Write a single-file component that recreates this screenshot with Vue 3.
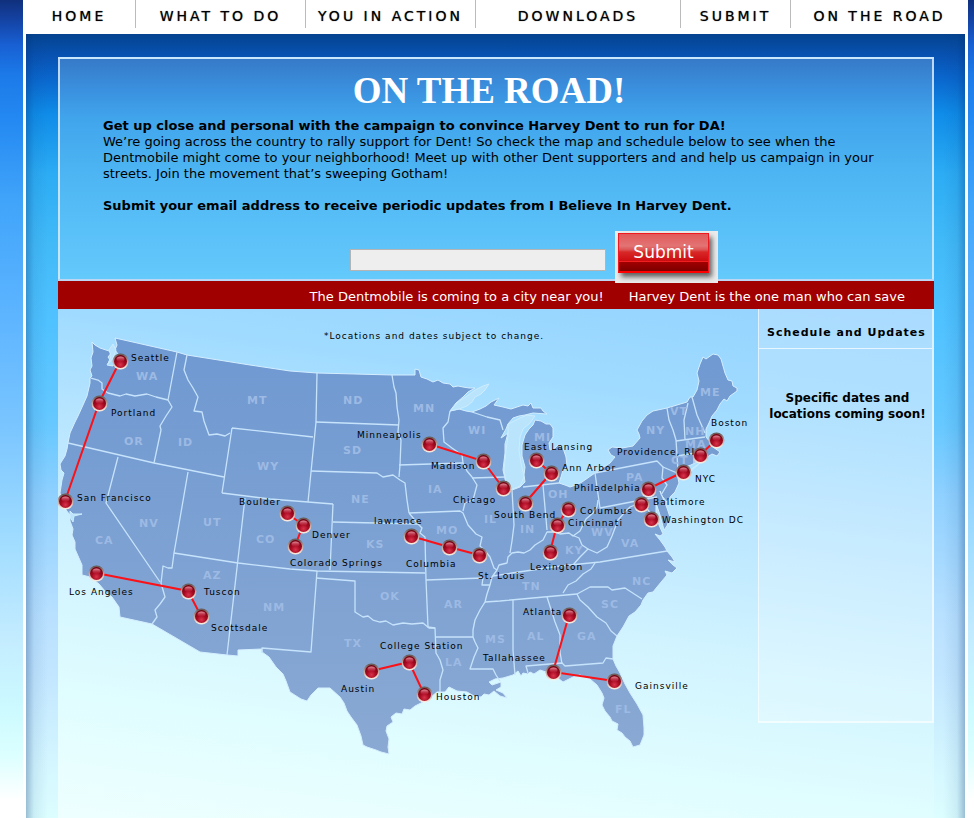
<script setup>
import { ref } from 'vue'

const email = ref('')

const navItems = ['HOME', 'WHAT TO DO', 'YOU IN ACTION', 'DOWNLOADS', 'SUBMIT', 'ON THE ROAD']

const stops = [
  { name: 'Seattle', x: 120, y: 361, lx: 131, ly: 361 },
  { name: 'Portland', x: 99, y: 403, lx: 111, ly: 416 },
  { name: 'San Francisco', x: 65, y: 501, lx: 77, ly: 501 },
  { name: 'Los Angeles', x: 96, y: 573, lx: 69, ly: 595 },
  { name: 'Tuscon', x: 188, y: 591, lx: 204, ly: 595 },
  { name: 'Scottsdale', x: 201, y: 616, lx: 211, ly: 631 },
  { name: 'Boulder', x: 287, y: 513, lx: 239, ly: 505 },
  { name: 'Denver', x: 303, y: 525, lx: 312, ly: 538 },
  { name: 'Colorado Springs', x: 295, y: 546, lx: 290, ly: 566 },
  { name: 'Minneapolis', x: 429, y: 444, lx: 357, ly: 438 },
  { name: 'Madison', x: 483, y: 461, lx: 431, ly: 469 },
  { name: 'Chicago', x: 503, y: 488, lx: 453, ly: 503 },
  { name: 'East Lansing', x: 536, y: 460, lx: 524, ly: 450 },
  { name: 'Ann Arbor', x: 551, y: 473, lx: 562, ly: 471 },
  { name: 'South Bend', x: 525, y: 503, lx: 494, ly: 518 },
  { name: 'lawrence', x: 411, y: 536, lx: 374, ly: 524 },
  { name: 'Columbia', x: 449, y: 547, lx: 406, ly: 567 },
  { name: 'St. Louis', x: 479, y: 555, lx: 478, ly: 579 },
  { name: 'Columbus', x: 568, y: 509, lx: 580, ly: 514 },
  { name: 'Cincinnati', x: 557, y: 525, lx: 568, ly: 526 },
  { name: 'Lexington', x: 550, y: 552, lx: 530, ly: 570 },
  { name: 'Boston', x: 716, y: 440, lx: 711, ly: 426 },
  { name: 'Providence, RI', x: 700, y: 455, lx: 617, ly: 455 },
  { name: 'NYC', x: 683, y: 472, lx: 695, ly: 482 },
  { name: 'Philadelphia', x: 648, y: 489, lx: 574, ly: 491 },
  { name: 'Baltimore', x: 641, y: 504, lx: 653, ly: 505 },
  { name: 'Washington DC', x: 651, y: 519, lx: 662, ly: 523 },
  { name: 'Atlanta', x: 569, y: 615, lx: 523, ly: 615 },
  { name: 'Tallahassee', x: 553, y: 672, lx: 483, ly: 661 },
  { name: 'Gainsville', x: 614, y: 681, lx: 635, ly: 689 },
  { name: 'Austin', x: 371, y: 671, lx: 341, ly: 692 },
  { name: 'College Station', x: 409, y: 662, lx: 380, ly: 649 },
  { name: 'Houston', x: 424, y: 694, lx: 436, ly: 700 },
]

const routes = [
  '120,361 99,403 65,501',
  '96,573 188,591 201,616',
  '287,513 303,525 295,546',
  '429,444 483,461 503,488',
  '536,460 551,473 525,503',
  '411,536 449,547 479,555',
  '568,509 557,525 550,552',
  '716,440 700,455',
  '683,472 648,489',
  '569,615 553,672 614,681',
  '371,671 409,662 424,694',
]

const states = [
  ['WA', 136, 380], ['OR', 124, 445], ['ID', 178, 446], ['MT', 247, 404], ['WY', 257, 470],
  ['NV', 139, 527], ['UT', 203, 526], ['CA', 95, 544], ['CO', 256, 543], ['AZ', 203, 579],
  ['NM', 263, 611], ['ND', 343, 404], ['SD', 343, 454], ['NE', 351, 503], ['KS', 366, 548],
  ['OK', 380, 600], ['TX', 344, 647], ['MN', 413, 412], ['IA', 428, 493], ['MO', 436, 534],
  ['AR', 444, 608], ['LA', 445, 666], ['WI', 468, 434], ['IL', 484, 523], ['IN', 520, 533],
  ['MI', 534, 441], ['OH', 548, 498], ['KY', 565, 554], ['TN', 522, 590], ['MS', 485, 643],
  ['AL', 527, 640], ['GA', 577, 640], ['FL', 615, 713], ['SC', 601, 608], ['NC', 632, 585],
  ['VA', 621, 547], ['WV', 591, 536], ['PA', 626, 481], ['NY', 646, 434], ['VT', 670, 415],
  ['NH', 685, 435], ['MA', 685, 448], ['CT', 671, 464], ['ME', 700, 396],
]

const mainland =
  'M92 342 L95 345 100 348 106 350 112 352 108 357 110 360 107 365 113 366 115 360 118 354 115 350 117 345 115 338 ' +
  'L146 345 177 352 187 355 250 365 290 371 317 373 355 374 392 375 415 375 415 369 419 370 421 377 ' +
  'L427 379 433 382 438 380 443 383 450 384 453 387 458 386 463 387 469 388 475 388 468 392 463 397 456 403 450 411 ' +
  'L459 409 466 411 472 412 480 409 486 406 491 402 499 398 494 405 503 407 511 409 517 407 523 405 528 406 531 403 533 408 541 408 543 411 547 414 ' +
  'L533 413 525 415 519 416 513 418 508 424 506 429 501 438 504 436 508 433 505 444 505 453 503 470 506 483 512 490 520 487 ' +
  'L525 482 524 475 525 467 522 456 522 445 525 435 529 429 533 425 535 420 541 421 546 424 550 424 553 428 553 437 549 443 550 450 555 448 558 445 563 448 566 457 567 466 563 470 561 477 559 483 ' +
  'L565 485 570 487 576 485 582 482 592 475 601 469 610 463 615 457 611 455 608 450 612 447 622 448 633 446 640 438 639 434 637 430 642 421 647 415 653 411 667 408 687 402 690 397 693 397 697 390 ' +
  'L699 381 697 373 700 364 703 357 706 359 713 354 718 355 721 359 725 373 728 380 732 381 733 386 737 388 737 391 730 396 727 401 724 399 720 404 717 410 712 416 709 423 706 429 706 437 ' +
  'L711 443 713 447 720 452 717 456 712 454 706 458 699 461 691 465 683 468 677 473 679 483 675 492 671 496 667 502 662 496 660 491 665 503 667 508 670 517 667 526 664 530 660 515 656 503 656 513 659 525 ' +
  'L663 534 660 536 655 534 660 540 665 547 667 551 672 557 675 562 668 560 673 565 677 568 672 573 665 571 667 575 662 581 657 587 653 592 648 593 643 600 641 605 635 612 629 616 623 627 617 636 613 646 613 659 ' +
  'L616 666 620 673 625 684 630 693 637 704 643 715 644 728 644 735 640 745 633 747 630 741 625 737 622 733 617 730 618 724 612 721 610 717 605 711 602 705 604 698 602 693 597 685 590 679 580 675 573 677 563 682 558 678 552 674 540 670 ' +
  'L534 674 530 672 528 674 523 673 521 676 518 671 513 675 503 678 495 679 489 682 492 685 501 682 501 687 496 690 503 693 507 698 500 696 494 691 489 695 484 694 481 697 474 696 467 692 457 691 449 687 445 692 437 692 ' +
  'L431 697 423 702 415 706 410 710 404 709 402 714 396 713 391 717 393 722 387 726 386 731 389 739 388 747 389 754 381 752 376 750 367 747 363 745 361 736 357 725 351 717 347 711 344 703 340 697 ' +
  'L330 688 318 688 311 695 307 701 301 699 290 692 286 681 283 674 276 667 269 657 262 652 262 649 238 650 238 656 227 655 200 652 152 624 120 617 119 607 112 597 105 591 99 584 90 577 82 575 82 565 ' +
  'L75 549 75 542 72 535 73 529 70 521 70 515 66 510 63 501 60 493 62 480 64 473 61 470 60 464 65 456 67 449 68 443 70 433 75 422 78 416 83 405 87 396 90 383 90 378 92 376 90 370 92 366 91 358 93 352 Z'

const borders = [
  'M91 378 98 380 102 383 102 389 108 393 120 396 126 394 135 396 147 394 156 397 168 400',
  'M177 352 168 400 172 407 166 416 160 426 161 430 154 463',
  'M68 443 154 463 224 477',
  'M187 355 184 370 188 380 193 388 198 397 194 411 202 412 204 421 209 435 217 434 225 436 230 433',
  'M232 428 222 493 M232 428 313 437 M222 493 270 499 333 504',
  'M317 373 316 422 308 502',
  'M118 457 106 503 160 582 M188 472 174 553',
  'M174 553 172 568 168 568 163 566 161 583 165 597 160 604 155 610 157 617 152 624',
  'M174 553 238 563 290 569 317 571 425 573',
  'M245 498 227 655 M317 571 311 652 262 648 262 653',
  'M316 578 355 581 355 612 363 617 368 616 373 620 380 622 386 621 393 625 403 623 412 624 423 623 429 628 435 628',
  'M333 504 330 570 M333 522 418 524',
  'M409 513 418 524 422 528 420 533 425 537 426 580 428 627 435 628 436 653 440 660 443 670 440 680 440 692',
  'M311 471 377 473 383 477 393 475 400 480 405 483 407 500 409 513',
  'M316 422 399 425',
  'M392 375 394 387 396 393 397 407 399 420 398 432 401 440 400 465 399 477',
  'M399 465 463 463',
  'M450 411 448 422 443 428 444 442 452 448 462 455 463 463 467 471 472 477 477 485 473 500 465 503 463 511',
  'M409 513 460 511 463 513 468 525 476 534 482 537 480 546 486 552 490 557 494 568 497 570',
  'M472 478 505 477 M472 412 487 417 500 420 503 430',
  'M512 490 514 525 512 541 510 553 M543 485 547 530',
  'M523 487 559 483',
  'M497 570 499 565 507 563 508 557 512 553 518 552 524 553 530 550 535 545 543 540 547 532 555 532 560 534 569 533 573 536 580 531 586 519 593 513 597 507 598 500',
  'M572 535 579 538 582 545 588 549 580 557 573 565',
  'M588 549 597 553 607 547 612 536 618 520 625 512 630 507 640 503 648 510 656 520',
  'M595 473 600 508 657 497 M595 473 657 461 663 467 662 478 667 485 661 495',
  'M663 467 677 473',
  'M493 576 512 573 560 566 600 562 667 551',
  'M426 580 483 578 482 585 490 585',
  'M497 570 492 577 490 585 487 594 485 602 480 610 475 620 473 630 473 637 475 642 478 648 474 657 470 669 493 669 496 675 500 681',
  'M435 637 473 637',
  'M485 602 500 601 577 594',
  'M595 563 591 569 583 574 576 581 568 585 563 593',
  'M577 594 590 587 608 587 612 590 625 588 642 599',
  'M577 594 580 600 588 607 597 617 606 623 611 631 617 636',
  'M513 600 513 650 515 675 M547 597 555 622 560 635 560 652 562 664',
  'M528 673 526 666 562 663 565 666 603 663 606 658 613 659',
  'M667 408 669 420 673 430 676 440 677 455 678 472',
  'M688 403 684 420 685 440 M692 397 697 415 705 433 M676 441 705 437 M677 456 696 453 699 460 M694 454 694 463',
]

const waters = [
  'M450 411 458 402 467 396 475 390 483 386 489 384 485 390 481 394 475 397 472 402 467 406 459 409 Z',
  'M520 418 527 415 535 416 530 423 523 429 520 437 519 450 521 463 524 477 520 486 512 489 506 483 504 470 506 450 508 436 508 424 Z',
  'M70 511 73 514 82 514 74 516 73 522 70 517 Z',
  'M679 475 690 470 700 463 690 472 681 477 Z',
  'M109 350 113 344 116 350 113 358 108 364 111 356 Z',
]
</script>

<template>
  <div class="page">
    <nav class="nav" aria-label="Main">
      <a v-for="item in navItems" :key="item" href="#">{{ item }}</a>
    </nav>

    <main class="content">
      <section class="hero">
        <h1>ON THE ROAD!</h1>
        <div class="copy">
          <p>
            <strong>Get up close and personal with the campaign to convince Harvey Dent to run for DA!</strong><br>
            We’re going across the country to rally support for Dent! So check the map and schedule below to see when the
            Dentmobile might come to your neighborhood! Meet up with other Dent supporters and and help us campaign in your
            streets. Join the movement that’s sweeping Gotham!
          </p>
          <p><label for="email">Submit your email address to receive periodic updates from I Believe In Harvey Dent.</label></p>
        </div>
        <form class="signup" @submit.prevent>
          <input id="email" v-model="email" type="text">
          <button type="submit"><span>Submit</span></button>
        </form>
      </section>

      <div class="ticker">
        <span>The Dentmobile is coming to a city near you!</span>
        <span>Harvey Dent is the one man who can save</span>
      </div>

      <section class="tour">
        <svg class="map" viewBox="58 309 700 509" role="img" aria-label="Tour map">
          <defs>
            <linearGradient id="land" x1="0" y1="0" x2="0" y2="1">
              <stop offset="0" stop-color="#6f99d2" />
              <stop offset="1" stop-color="#8aa9d3" />
            </linearGradient>
            <radialGradient id="pin" cx="0.5" cy="0.75" r="0.75">
              <stop offset="0" stop-color="#d8344a" />
              <stop offset="0.45" stop-color="#a80a22" />
              <stop offset="1" stop-color="#6c0010" />
            </radialGradient>
            <linearGradient id="rim" x1="0" y1="0" x2="0" y2="1">
              <stop offset="0" stop-color="#5f5350" />
              <stop offset="0.5" stop-color="#c3a49c" />
              <stop offset="1" stop-color="#fff0e4" />
            </linearGradient>
            <linearGradient id="shine" x1="0" y1="0" x2="0" y2="1">
              <stop offset="0" stop-color="#f5a3b0" stop-opacity="0.9" />
              <stop offset="1" stop-color="#d03048" stop-opacity="0.2" />
            </linearGradient>
          </defs>
          <path class="land" :d="mainland" />
          <path v-for="(d, i) in waters" :key="'w' + i" class="water" :d="d" />
          <path v-for="(d, i) in borders" :key="'b' + i" class="border" :d="d" />
          <text v-for="s in states" :key="s[0]" class="state" :x="s[1]" :y="s[2]">{{ s[0] }}</text>
          <polyline v-for="(r, i) in routes" :key="'r' + i" class="route" :points="r" />
          <g v-for="s in stops" :key="s.name">
            <circle :cx="s.x + 0.5" :cy="s.y + 0.5" r="8" fill="url(#rim)" />
            <circle :cx="s.x + 0.5" :cy="s.y + 0.5" r="6.5" fill="url(#pin)" />
            <ellipse :cx="s.x + 0.5" :cy="s.y - 2" rx="4" ry="2.6" fill="url(#shine)" />
          </g>
          <text v-for="s in stops" :key="'l' + s.name" class="city" :x="s.lx" :y="s.ly">{{ s.name }}</text>
          <text class="city" x="324" y="339">*Locations and dates subject to change.</text>
        </svg>
        <aside class="schedule">
          <h2>Schedule and Updates</h2>
          <p>Specific dates and locations coming soon!</p>
        </aside>
      </section>
    </main>
  </div>
</template>

<style>
body {
  margin: 0;
  background: linear-gradient(#10307c 0, #1443a4 20px, #1860d4 45px, #1c7ae8 75px, #2489f2 120px, #40a4fa 200px, #5cb4ff 310px, #78c4ff 420px, #a0dcff 540px, #c4ecff 640px, #ccfaff 710px, #dcffff 755px, #fff 800px) no-repeat #fff;
}
</style>

<style scoped>
.page {
  margin: 0 6px 0 23px;
  background: #fff;
  font-family: Verdana, "DejaVu Sans", sans-serif;
  font-size: 13px;
  line-height: 16px;
  color: #000;
}

.nav {
  display: grid;
  grid-template-columns: 113fr 170fr 170fr 205fr 110fr 177fr;
  padding: 0 0 6px;
}

.nav a {
  padding: 6px 0 2px;
  border-right: 1px solid #bbb;
  color: #000;
  font-size: 14px;
  line-height: 20px;
  letter-spacing: 3px;
  text-align: center;
  text-decoration: none;
  text-shadow: 0 0 1px rgba(0, 0, 0, 0.7);
  white-space: nowrap;
}

.nav a:last-child {
  border-right: 0;
}

.content {
  margin: 0 3px;
  padding: 23px 31px 0 32px;
  background:
    linear-gradient(90deg, rgba(0, 45, 110, 0.3), rgba(0, 60, 130, 0.08) 8px, transparent 22px calc(100% - 22px), rgba(0, 60, 130, 0.08) calc(100% - 8px), rgba(0, 45, 110, 0.3)),
    linear-gradient(#04438f 0, #0852b2 22px, #0a66cc 44px, #0f8ce8 80px, #2cacf4 140px, #42baf8 210px, #50c2ff 290px, #66c8ff 390px, #8ed0ff 460px, #b8e0ff 580px, #c2e6ff 640px, #d4f6ff 730px, #dcfeff 784px);
}

.hero {
  padding: 13px 43px 0;
  border: 2px solid rgba(225, 238, 252, 0.8);
  background: linear-gradient(#367ac8, #3a90de 30px, #41a5ec 60px, #4cb4f2 110px, #57bef7 160px, #64c9fb);
}

h1 {
  margin: 0;
  padding-right: 14px;
  color: #fff;
  font: bold 37px/38px "Liberation Serif", serif;
  text-align: center;
}

.copy {
  padding-top: 8px;
}

.copy p {
  margin: 0 0 16px;
}

.copy p:last-child {
  margin-bottom: 0;
}

.copy label {
  font-weight: bold;
}

.signup {
  display: flex;
  position: relative;
  z-index: 1;
  align-items: center;
  justify-content: center;
  gap: 9px;
  margin: 17px 0 -4px;
  padding-left: 76px;
}

.signup input {
  box-sizing: border-box;
  width: 256px;
  height: 22px;
  margin: 6px 0 0;
  padding: 2px;
  border: 1px solid #b4b4b4;
  background: #eee;
  font: inherit;
}

.signup button {
  margin: 0;
  padding: 2px 9px 10px 3px;
  border: 0;
  background: #ebebeb;
  color: #fff;
  font: 17px/36px Verdana, "DejaVu Sans", sans-serif;
}

.signup button span {
  display: block;
  box-sizing: border-box;
  width: 91px;
  height: 40px;
  border: 1px solid #f01820;
  border-bottom: 2px solid #ff0000;
  background: linear-gradient(#e25a5a 0, #e27474 12px, #dd5050 16px, #d82828 18px, #cc0c10 27px, #f02020 27px, #f02020 28px, #a00000 28px, #780000 38px);
  box-shadow: 3px 4px 5px rgba(0, 0, 0, 0.6);
}

.ticker {
  display: flex;
  justify-content: flex-end;
  gap: 25px;
  padding: 8px 29px 4px 0;
  overflow: hidden;
  background: #a00000;
  color: #fff;
  white-space: nowrap;
}

.tour {
  display: grid;
  grid-template-columns: minmax(0, 1fr) 176px;
  align-items: start;
  background: linear-gradient(188deg, #94d3ff, #a0dbff 20%, #bce7ff 40%, #d2f4ff 60%, #e0fdff 80%, #eeffff);
}

.map {
  display: block;
  width: 100%;
  height: auto;
}

.land {
  fill: url(#land);
  stroke: #d4eeff;
  stroke-width: 1;
  stroke-linejoin: round;
}

.water {
  fill: #b9e4fb;
  stroke: #cdecff;
  stroke-width: 1;
}

.border {
  fill: none;
  stroke: #c6e3fb;
  stroke-width: 1.3;
  stroke-linejoin: round;
}

.state {
  fill: #9dbae4;
  font-size: 11px;
  font-weight: bold;
  letter-spacing: 1px;
}

.city {
  font-size: 9px;
  letter-spacing: 1px;
}

.route {
  fill: none;
  stroke: #fb1118;
  stroke-width: 2;
}

.schedule {
  box-sizing: border-box;
  min-height: 414px;
  border: solid rgba(255, 255, 255, 0.6);
  border-width: 0 2px 2px 1px;
  background: rgba(255, 255, 255, 0.2);
  font-weight: bold;
}

h2 {
  margin: 0;
  padding: 16px 8px 7px;
  border-bottom: 1px solid rgba(255, 255, 255, 0.7);
  font-size: 11px;
  line-height: 16px;
  letter-spacing: 1px;
  white-space: nowrap;
}

.schedule p {
  margin: 0;
  padding: 41px 0 0 4px;
  font-size: 12px;
  text-align: center;
}
</style>
